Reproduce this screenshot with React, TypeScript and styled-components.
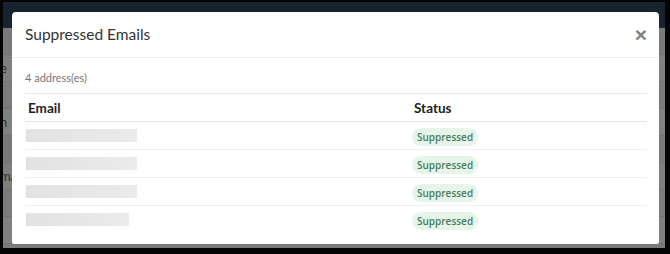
import React from 'react';
import styled, { createGlobalStyle } from 'styled-components';

const Global = createGlobalStyle`
  html, body {
    margin: 0;
    padding: 0;
    background: #000;
  }
  body {
    font-family: Lato, "Open Sans", sans-serif;
  }
`;

const Frame = styled.div`
  width: 670px;
  height: 254px;
  box-sizing: border-box;
  padding: 2px 5px 6px 3px;
  background: #050505;
`;

const Screen = styled.div`
  position: relative;
  height: 100%;
  display: grid;
  grid-template-rows: 26px 1fr;
  overflow: hidden;
  background: #7d7d7d;
`;

const TopBar = styled.div`
  background: #17242f;
`;

const Page = styled.div`
  display: flex;
  flex-direction: column;
`;

const PageRow = styled.div<{ $shade: string }>`
  height: 26px;
  background: ${(p) => p.$shade};
  border-bottom: 1px solid #747474;
  font-size: 13px;
  color: #2f2f2f;
  line-height: 26px;
  margin-left: -3px;
  white-space: nowrap;
`;

const Modal = styled.div`
  position: absolute;
  left: 9px;
  top: 10px;
  width: 647px;
  height: 232px;
  background: #fff;
  border-radius: 4px 4px 2px 2px;
  display: flex;
  flex-direction: column;
`;

const Header = styled.div`
  height: 46px;
  box-sizing: border-box;
  display: flex;
  align-items: center;
  justify-content: space-between;
  padding: 0 12px 1px 13px;
  border-bottom: 1px solid #ececec;
`;

const Title = styled.h2`
  margin: 0;
  font-size: 15.5px;
  font-weight: 400;
  color: #333;
`;

const Close = styled.button`
  border: 0;
  background: none;
  padding: 0;
  font-family: "Liberation Sans", Arial, sans-serif;
  font-size: 21px;
  font-weight: 700;
  color: #808080;
  line-height: 1;
  cursor: pointer;
`;

const Body = styled.div`
  padding: 13px 12px 0 13px;
`;

const Count = styled.div`
  font-size: 11px;
  color: #777;
  line-height: 14px;
  margin-bottom: 8px;
`;

const Table = styled.table`
  width: 100%;
  border-collapse: collapse;
  border-top: 1px solid #e8e8e8;
`;

const Th = styled.th`
  text-align: left;
  font-size: 13.5px;
  font-weight: 700;
  color: #222;
  height: 27px;
  padding: 0 3px;
  border-bottom: 1px solid #e6e6e6;
`;

const Td = styled.td<{ $last?: boolean }>`
  height: 27px;
  padding: 0 1px;
  border-bottom: ${(p) => (p.$last ? 'none' : '1px solid #efefef')};
  vertical-align: middle;
`;

const Redacted = styled.div`
  height: 13px;
  background: linear-gradient(90deg, #e2e2e2, #ebebeb);
`;

const Badge = styled.span`
  display: inline-block;
  font-family: "Open Sans", sans-serif;
  font-size: 10px;
  font-weight: 600;
  color: #467f57;
  background: #e6f4ea;
  border-radius: 9px;
  padding: 0 5px;
  line-height: 18px;
`;

const rows = [111, 111, 111, 103];
const page = ['#7a7a7a', '#808080', '#7b7b7b', '#818181', '#7a7a7a', '#7f7f7f', '#7c7c7c', '#808080', '#7a7a7a'];

export default function App() {
  return (
    <>
      <Global />
      <Frame>
        <Screen>
          <TopBar />
          <Page>
            {page.map((c, i) => (
              <PageRow key={i} $shade={c}>
                {i === 1 ? 'e' : i === 3 ? 'n' : i === 5 ? 'ma' : ''}
              </PageRow>
            ))}
          </Page>
          <Modal>
            <Header>
              <Title>Suppressed Emails</Title>
              <Close aria-label="close">×</Close>
            </Header>
            <Body>
              <Count>4 address(es)</Count>
              <Table>
                <thead>
                  <tr>
                    <Th style={{ width: 380 }}>Email</Th>
                    <Th>Status</Th>
                  </tr>
                </thead>
                <tbody>
                  {rows.map((w, i) => (
                    <tr key={i}>
                      <Td $last={i === rows.length - 1}>
                        <Redacted style={{ width: w }} />
                      </Td>
                      <Td $last={i === rows.length - 1}>
                        <Badge>Suppressed</Badge>
                      </Td>
                    </tr>
                  ))}
                </tbody>
              </Table>
            </Body>
          </Modal>
        </Screen>
      </Frame>
    </>
  );
}
